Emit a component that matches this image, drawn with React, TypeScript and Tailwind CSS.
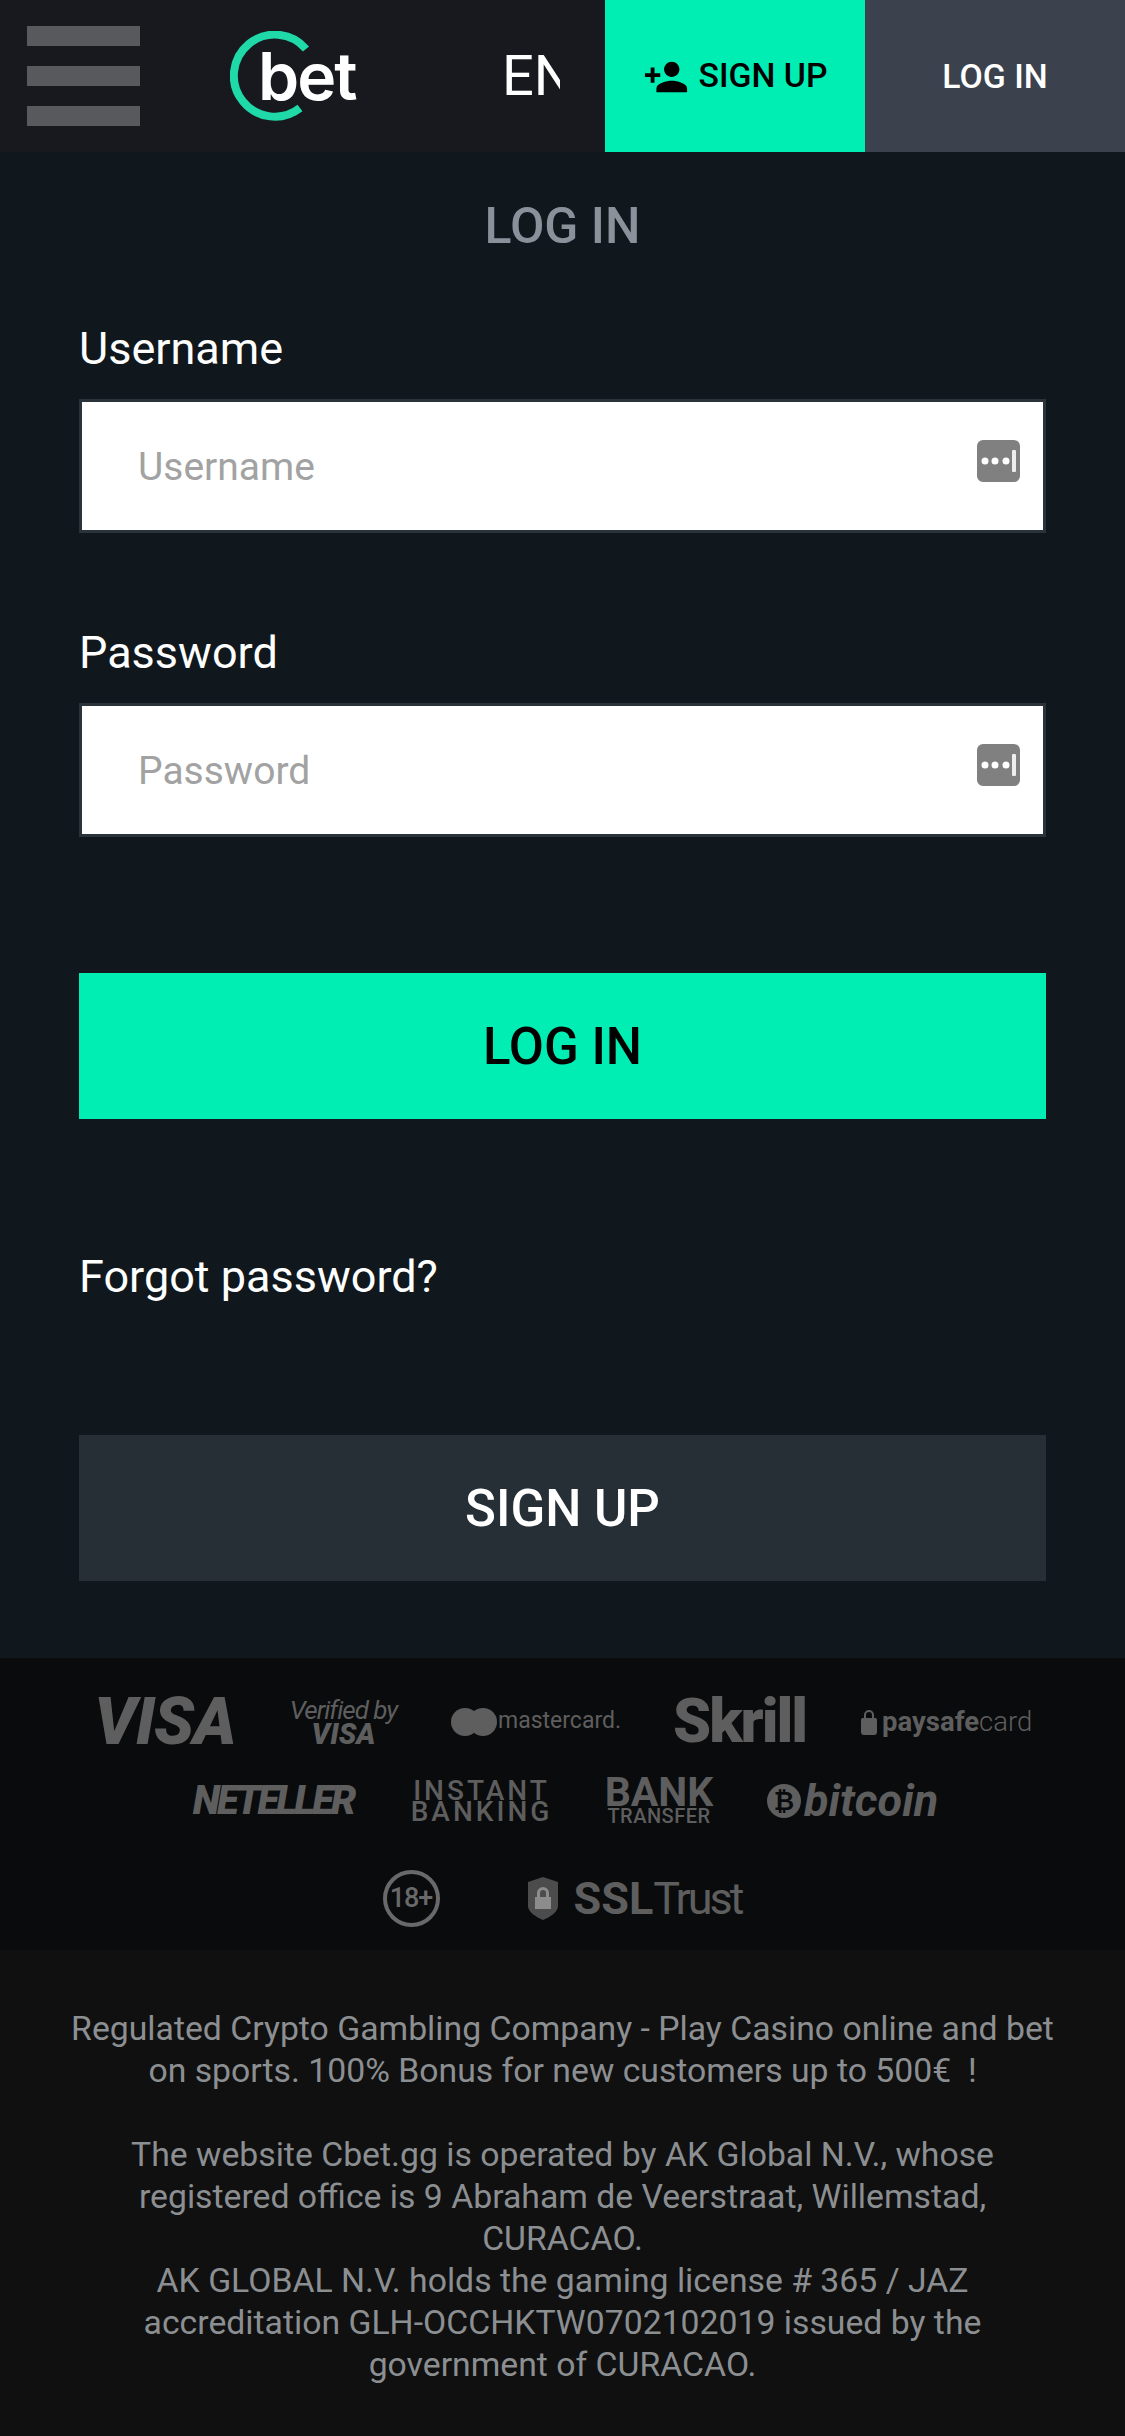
import React from "react";
import { MdPersonAdd } from "react-icons/md";

const roboto = "font-['Roboto',sans-serif]";

function KeyIcon() {
  return (
    <svg width="43" height="42" viewBox="0 0 43 42" className="absolute right-[26px] top-[41px]">
      <rect width="43" height="42" rx="6" fill="#808080" />
      <circle cx="8" cy="21" r="3.5" fill="#fff" />
      <circle cx="18" cy="21" r="3.5" fill="#fff" />
      <circle cx="29" cy="21" r="3.5" fill="#fff" />
      <rect x="35" y="10" width="4" height="22" rx="1" fill="#eee" />
    </svg>
  );
}

function Field({ label, first }: { label: string; first?: boolean }) {
  return (
    <div className={first ? "mt-[69px]" : "mt-[93px]"}>
      <label className="block h-[52px] text-[45px] leading-[53px] text-white">{label}</label>
      <div className="relative mt-[25px] h-[134px]">
        <input
          placeholder={label}
          className="h-full w-full border-[3px] border-[#2a323a] bg-white pt-[2px] pl-[56px] text-[39px] text-black outline-none placeholder:text-[#a2a2a2]"
        />
        <KeyIcon />
      </div>
    </div>
  );
}

function Logos() {
  return (
    <section className={`h-[292px] bg-[#0a0b0d] pt-[41px] text-[#5e5e5e] ${roboto}`}>
      <div className="flex h-[45px] items-center justify-center gap-[55px]">
        <span className="flex w-[142px] justify-center text-[66px] leading-[45px] font-black tracking-[-1px] whitespace-nowrap italic">VISA</span>
        <span className="flex w-[105px] flex-col items-center">
          <span className="text-[26px] leading-[25px] tracking-[-1px] whitespace-nowrap italic">Verified by</span>
          <span className="text-[29px] leading-[22px] font-black italic">VISA</span>
        </span>
        <span className="flex w-[167px] items-center gap-[1px]">
          <svg width="46" height="28" viewBox="0 0 46 28" fill="currentColor" className="shrink-0">
            <circle cx="14" cy="14" r="14" />
            <circle cx="32" cy="14" r="14" />
          </svg>
          <span className="text-[23px] whitespace-nowrap">mastercard.</span>
        </span>
        <span className="flex w-[133px] justify-center text-[61px] leading-[45px] font-black tracking-[-2px]">Skrill</span>
        <span className="flex w-[170px] items-center gap-[5px]">
          <svg width="16" height="26" viewBox="0 0 16 26" fill="currentColor" className="shrink-0">
            <path d="M3 9V6a5 5 0 0 1 10 0v3h1.500a1.500 1.500 0 0 1 1.500 1.500V23a3 3 0 0 1-3 3H3a3 3 0 0 1-3-3V10.500A1.500 1.500 0 0 1 1.500 9Zm2 0h6V6a3 3 0 0 0-6 0Z" />
          </svg>
          <span className="text-[27.5px] leading-[30px] whitespace-nowrap">
            <span className="font-bold">paysafe</span>
            <span className="font-light">card</span>
          </span>
        </span>
      </div>
      <div className="mt-[34px] flex h-[45px] items-center justify-center gap-[55px]">
        <span className="flex w-[168px] justify-center text-[40px] leading-[45px] font-black tracking-[-3px] whitespace-nowrap italic">NETELLER</span>
        <span className="flex w-[139px] flex-col items-center text-[28px] leading-[21px] font-medium tracking-[3px] whitespace-nowrap">
          <span>INSTANT</span>
          <span>BANKING</span>
        </span>
        <span className="flex w-[106px] flex-col items-center whitespace-nowrap">
          <span className="text-[41px] leading-[31px] font-bold">BANK</span>
          <span className="text-[20px] leading-[16px] font-medium tracking-[0.5px]">TRANSFER</span>
        </span>
        <span className="flex w-[169px] items-center gap-[3px]">
          <svg width="34" height="34" viewBox="0 0 34 34" className="shrink-0">
            <circle cx="17" cy="17" r="17" fill="currentColor" />
            <text x="17" y="26" textAnchor="middle" fontSize="25" fontWeight="700" fill="#0a0b0d" fontFamily="Liberation Sans">₿</text>
          </svg>
          <span className="text-[45px] leading-[45px] font-bold italic">bitcoin</span>
        </span>
      </div>
      <div className="mt-[47px] flex h-[57px] items-center justify-center gap-[88px]">
        <span className="flex h-[57px] w-[57px] items-center justify-center rounded-full border-[4px] border-[#696969] text-[27px] font-medium tracking-[-1px] text-[#696969]">18+</span>
        <span className="flex w-[215px] items-center gap-[16px]">
          <svg width="30" height="43" viewBox="0 0 30 43" className="shrink-0">
            <path d="M15 0 30 5v24c0 6-8 11-15 14C8 40 0 35 0 29V5Z" fill="#4c4c4c" />
            <path fillRule="evenodd" d="M15 10a6 6 0 0 0-6 6v4H7v12h16V20h-2v-4a6 6 0 0 0-6-6Zm0 3a3 3 0 0 1 3 3v4h-6v-4a3 3 0 0 1 3-3Z" fill="#8c8c8c" />
          </svg>
          <span className="text-[45px] leading-[45px] whitespace-nowrap">
            <span className="font-bold">SSL</span>
            <span className="font-normal tracking-[-3px]">Trust</span>
          </span>
        </span>
      </div>
    </section>
  );
}

export default function App() {
  return (
    <div className={`w-[1125px] ${roboto}`}>
      <header className="flex h-[152px] items-center bg-[#18191e]">
        <div className="ml-[27px] flex w-[113px] flex-col gap-[20px]">
          <div className="h-[20px] bg-[#58595c]" />
          <div className="h-[20px] bg-[#58595c]" />
          <div className="h-[20px] bg-[#58595c]" />
        </div>
        <div className="relative ml-[90px] h-[90px] w-[125px]">
          <svg width="90" height="90" viewBox="0 0 90 90" className="absolute top-0 left-0">
            <path d="M 76 18 A 41 41 0 1 0 70 77" fill="none" stroke="#1fd9a8" strokeWidth="8" />
          </svg>
          <span className="absolute top-[5px] left-[28px] font-['Inter',sans-serif] text-[66px] leading-[80px] font-semibold tracking-[-2px] text-white">bet</span>
        </div>
        <div className="ml-[147px] w-[58px] overflow-hidden text-[56px] leading-[60px] whitespace-nowrap text-white">EN</div>
        <button className="ml-auto flex h-full w-[260px] items-center justify-center gap-[10px] bg-[#00edb3] pt-[1px] text-[33.75px] font-medium text-black">
          <MdPersonAdd className="h-[46px] w-[46px] shrink-0" />
          SIGN UP
        </button>
        <button className="flex h-full w-[260px] items-center justify-center bg-[#3b424e] pt-[2px] text-[33.75px] font-medium text-white">LOG IN</button>
      </header>
      <main className="bg-[#10181e] px-[79px] pt-[45px] pb-[77px]">
        <h1 className="text-center text-[50px] leading-[58px] font-medium text-[#8a919a]">LOG IN</h1>
        <div className="-mt-[2px]">
          <Field label="Username" first />
        </div>
        <Field label="Password" />
        <button className="mt-[136px] flex h-[146px] w-full items-center justify-center bg-[#00edb3] pt-[2px] text-[51px] font-medium text-black">LOG IN</button>
        <a className="mt-[131px] block text-[45px] leading-[54px] text-white">Forgot password?</a>
        <button className="mt-[131px] flex h-[146px] w-full items-center justify-center bg-[#262e36] pt-[2px] text-[51px] font-medium text-white">SIGN UP</button>
      </main>
      <Logos />
      <footer className="h-[486px] bg-[#101010] px-[70px] pt-[58px] text-center text-[33.75px] leading-[42px] text-[#8c8f92]">
        <p>Regulated Crypto Gambling Company - Play Casino online and bet on sports. 100% Bonus for new customers up to 500€ &nbsp;!</p>
        <p className="mt-[42px]">The website Cbet.gg is operated by AK Global N.V., whose registered office is 9 Abraham de Veerstraat, Willemstad, CURACAO.</p>
        <p>AK GLOBAL N.V. holds the gaming license # 365 / JAZ accreditation GLH-OCCHKTW0702102019 issued by the government of CURACAO.</p>
      </footer>
    </div>
  );
}
